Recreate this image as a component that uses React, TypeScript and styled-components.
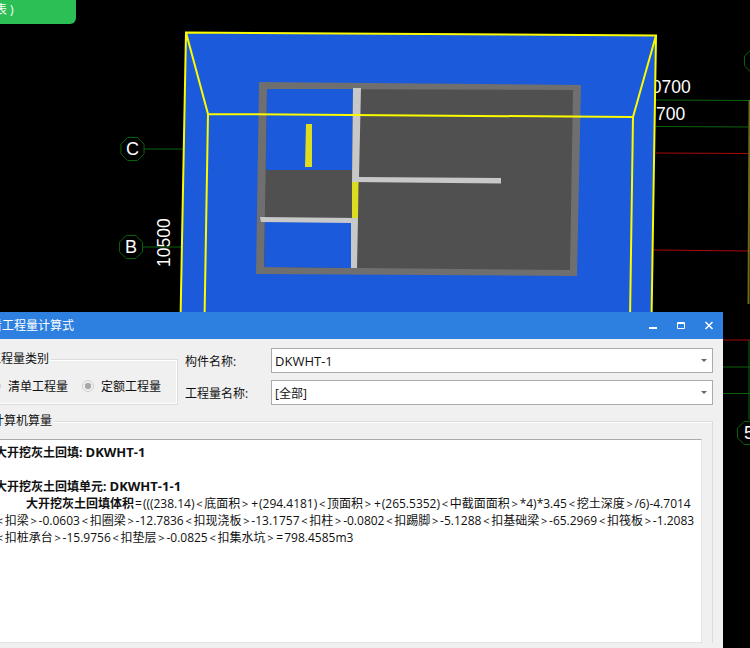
import styled, { createGlobalStyle } from 'styled-components';

const GlobalStyle = createGlobalStyle`
  html, body {
    margin: 0;
    padding: 0;
    background: #000;
    overflow: hidden;
  }
`;

const Stage = styled.div`
  position: relative;
  width: 750px;
  height: 648px;
  overflow: hidden;
  background: #000;
  font-family: 'Open Sans', 'Noto Sans CJK SC', sans-serif;
`;

const Drawing = styled.svg`
  display: block;
  width: 750px;
  height: 648px;
`;

const Badge = styled.div`
  position: absolute;
  top: 0;
  left: 0;
  width: 76px;
  height: 24px;
  border-bottom-right-radius: 6px;
  background: #2bbf55;
  color: #fff;
  font-size: 12px;
  line-height: 20px;
  white-space: nowrap;
  overflow: hidden;
  text-indent: -5px;
`;

const Dialog = styled.div`
  position: absolute;
  top: 312px;
  left: -25px;
  width: 748px;
  height: 336px;
  display: flex;
  flex-direction: column;
  background: #f0f0f0;
  color: #111;
  font-size: 12px;
`;

const TitleBar = styled.div`
  flex: none;
  box-sizing: border-box;
  height: 27px;
  display: flex;
  align-items: center;
  justify-content: space-between;
  padding: 0 7px 1px 6px;
  background: #2d7fe0;
  color: #fff;
  font-size: 12px;
`;

const TitleText = styled.span`
  margin-left: -3px;
`;

const WindowButtons = styled.div`
  display: flex;
  align-items: center;
  gap: 14px;
`;

const WindowIcon = styled.svg`
  display: block;
  width: 14px;
  height: 14px;
`;

const TopRow = styled.div`
  flex: none;
  display: flex;
  align-items: flex-start;
  gap: 7px;
  padding: 9px 10px 0 0;
`;

const TypeGroup = styled.fieldset`
  box-sizing: border-box;
  width: 203px;
  height: 54px;
  margin: 3px 0 0;
  padding: 0 0 0 14px;
  border: 1px solid #dcdcdc;
  border-left: none;
  display: flex;
  align-items: center;
  gap: 14px;
  box-shadow: inset 0 0 0 1px #fff;
`;

const GroupLegend = styled.legend`
  padding: 0 2px;
  margin-left: -2px;
  font-size: 12px;
  line-height: 16px;
`;

const RadioItem = styled.div`
  display: flex;
  align-items: center;
  gap: 7px;
  white-space: nowrap;
`;

const RadioMark = styled.span<{ checked: boolean }>`
  box-sizing: border-box;
  width: 12px;
  height: 12px;
  border-radius: 50%;
  border: 1px solid #cfcfcf;
  background: ${(props) => (props.checked ? 'radial-gradient(circle, #a8a8a8 0 3px, #f0f0f0 3.5px)' : '#f0f0f0')};
`;

const Fields = styled.div`
  flex: 1;
  display: flex;
  flex-direction: column;
  gap: 7px;
`;

const FieldRow = styled.div`
  display: flex;
  align-items: center;
`;

const FieldLabel = styled.span`
  width: 86px;
  flex: none;
`;

const SelectBox = styled.div`
  box-sizing: border-box;
  flex: 1;
  height: 25px;
  display: flex;
  align-items: center;
  justify-content: space-between;
  padding: 0 5px 0 3px;
  background: #fff;
  border: 1px solid #ababab;
  font-size: 12px;
`;

const Caret = styled.span`
  width: 0;
  height: 0;
  border-left: 3px solid transparent;
  border-right: 3px solid transparent;
  border-top: 3px solid #666;
`;

const CalcGroup = styled.div`
  flex: 1;
  min-height: 0;
  margin: 16px 10px 5px 0;
  display: flex;
  flex-direction: column;
  position: relative;
  border-top: 1px solid #dcdcdc;
  border-right: 1px solid #dcdcdc;
  box-shadow: inset 0 1px 0 #fff;
`;

const CalcLegend = styled.span`
  position: absolute;
  top: -9px;
  left: 15px;
  padding: 0 2px;
  background: #f0f0f0;
  line-height: 16px;
`;

const ResultBox = styled.div`
  flex: 1;
  margin: 17px 10px 0 0;
  padding: 4px 0 0 20px;
  background: #fff;
  border-top: 1px solid #ababab;
  border-right: 1px solid #e3e3e3;
  border-bottom: 1px solid #e3e3e3;
  color: #111;
  font-size: 12px;
  line-height: 17px;
`;

const ResultLine = styled.div<{ indent?: boolean; bold?: boolean }>`
  min-height: 17px;
  white-space: nowrap;
  padding-left: ${(props) => (props.indent ? '31px' : '0')};
  font-weight: ${(props) => (props.bold ? 700 : 400)};
`;

const Strong = styled.b`
  font-weight: 700;
`;

const Code = styled.span`
  font-size: 13px;
`;

// the < > signs sit wider apart in the original font
const Bracket = styled.span`
  margin: 0 1.75px;
  font-size: 11px;
`;

const Operator = styled.span`
  margin: 0 1px;
`;

const withSigns = (text: string) =>
  text.split(/([<>+=])/).map((part, index) => {
    if (index % 2 === 0) return part;
    return part === '<' || part === '>' ? <Bracket key={index}>{part}</Bracket> : <Operator key={index}>{part}</Operator>;
  });

const BLUE = '#1a5adb';
const YELLOW = '#fbfb00';
const GREEN = '#0a640a';
const RED = '#a80a0a';

const Marker = ({ x, y, label }: { x: number; y: number; label: string }) => {
  const points = Array.from({ length: 8 }, (_, i) => {
    const angle = (Math.PI / 4) * i + Math.PI / 8;
    return `${x + 12.5 * Math.cos(angle)},${y + 12.5 * Math.sin(angle)}`;
  }).join(' ');
  return (
    <g>
      <polygon points={points} fill="none" stroke={GREEN} strokeWidth="1" />
      <text x={x} y={y + 6} fill="#fff" fontSize="18" textAnchor="middle" fontFamily="'Liberation Sans', sans-serif">
        {label}
      </text>
    </g>
  );
};

const CadView = () => (
  <Drawing viewBox="0 0 750 648">
    <g fill="#fff" fontSize="17.5" fontFamily="'Liberation Sans', sans-serif">
      <text x="642" y="93">10700</text>
      <text x="656" y="120">700</text>
      <text transform="translate(170 267) rotate(-90)">10500</text>
    </g>

    <path d="M656 100 L750 100.500 M656 126.500 L750 127 M723 367 L750 367 M723 393.500 L750 393.500 M749 340 L749 420" stroke={GREEN} fill="none" />
    <path d="M656 153 L750 153.500 M653 250 L750 251 M723 340 L750 340" stroke={RED} fill="none" />
    <path d="M749.500 100 L748.500 304" stroke="#6b6b1e" strokeWidth="2" fill="none" />
    <path d="M144 149 L183 149 M143 247 L181 247" stroke={GREEN} fill="none" />
    <Marker x={132.500} y={149} label="C" />
    <Marker x={131} y={247} label="B" />
    <Marker x={756} y={61} label="" />
    <Marker x={749} y={433} label="5" />

    <polygon points="186,32 656,35 651,320 180,320" fill={BLUE} />

    {/* slab outline and rooms */}
    <polygon points="259,82 581,85 577,276 256,274" fill="#6f6f6f" />
    <polygon points="267,89 573,90 570,270 264,267" fill="#505050" />
    <polygon points="267,89 353,89 352,170 266,170" fill={BLUE} />
    <polygon points="265,222 351,222 351,268 264.500,267" fill={BLUE} />
    <polygon points="306,124 312,124 312,167 305,167" fill="#dcdc20" />
    <polygon points="353,88 361,88 359,177 501,178 501,183.500 352,182" fill="#c8c8c8" />
    <polygon points="352,182 358.500,182 358,218 352,218" fill="#dcdc20" />
    <polygon points="260,217 358,218 357,268 351,268 351,223 261,222" fill="#c8c8c8" />

    {/* excavation edges */}
    <path
      d="M180.500 320 L186 32.500 L656 35.500 L651.500 320 M186 32.500 L208 114 L633 117 L656 35.500 M208 114 L204.500 320 M633 117 L630 320"
      stroke={YELLOW}
      strokeWidth="2"
      fill="none"
    />
  </Drawing>
);

const App = () => (
  <Stage>
    <GlobalStyle />
    <CadView />
    <Badge>表 )</Badge>
    <Dialog>
      <TitleBar>
        <TitleText>查看工程量计算式</TitleText>
        <WindowButtons>
          <WindowIcon viewBox="0 0 14 14">
            <rect x="3" y="9" width="8" height="2" fill="#fff" />
          </WindowIcon>
          <WindowIcon viewBox="0 0 14 14">
            <path d="M3.500 4.500 H10.500 V10.500 H3.500 Z M3.500 5.500 H10.500" stroke="#fff" fill="none" />
          </WindowIcon>
          <WindowIcon viewBox="0 0 14 14">
            <path d="M3.500 4 L10.500 11 M10.500 4 L3.500 11" stroke="#fff" strokeWidth="1.500" fill="none" />
          </WindowIcon>
        </WindowButtons>
      </TitleBar>
      <TopRow>
        <TypeGroup>
          <GroupLegend>工程量类别</GroupLegend>
          <RadioItem>
            <RadioMark checked={false} />
            清单工程量
          </RadioItem>
          <RadioItem>
            <RadioMark checked />
            定额工程量
          </RadioItem>
        </TypeGroup>
        <Fields>
          <FieldRow>
            <FieldLabel>构件名称:</FieldLabel>
            <SelectBox>
              <Code>DKWHT-1</Code>
              <Caret />
            </SelectBox>
          </FieldRow>
          <FieldRow>
            <FieldLabel>工程量名称:</FieldLabel>
            <SelectBox>
              [全部]
              <Caret />
            </SelectBox>
          </FieldRow>
        </Fields>
      </TopRow>
      <CalcGroup>
        <CalcLegend>计算机算量</CalcLegend>
        <ResultBox>
          <ResultLine bold>
            大开挖灰土回填: <Code>DKWHT-1</Code>
          </ResultLine>
          <ResultLine />
          <ResultLine bold>
            大开挖灰土回填单元: <Code>DKWHT-1-1</Code>
          </ResultLine>
          <ResultLine indent>
            <Strong>大开挖灰土回填体积</Strong>
            {withSigns('=(((238.14)<底面积>+(294.4181)<顶面积>+(265.5352)<中截面面积>*4)*3.45<挖土深度>/6)-4.7014')}
          </ResultLine>
          <ResultLine>
            {withSigns('<扣梁>-0.0603<扣圈梁>-12.7836<扣现浇板>-13.1757<扣柱>-0.0802<扣踢脚>-5.1288<扣基础梁>-65.2969<扣筏板>-1.2083')}
          </ResultLine>
          <ResultLine>{withSigns('<扣桩承台>-15.9756<扣垫层>-0.0825<扣集水坑>=798.4585m3')}</ResultLine>
        </ResultBox>
      </CalcGroup>
    </Dialog>
  </Stage>
);

export default App;
